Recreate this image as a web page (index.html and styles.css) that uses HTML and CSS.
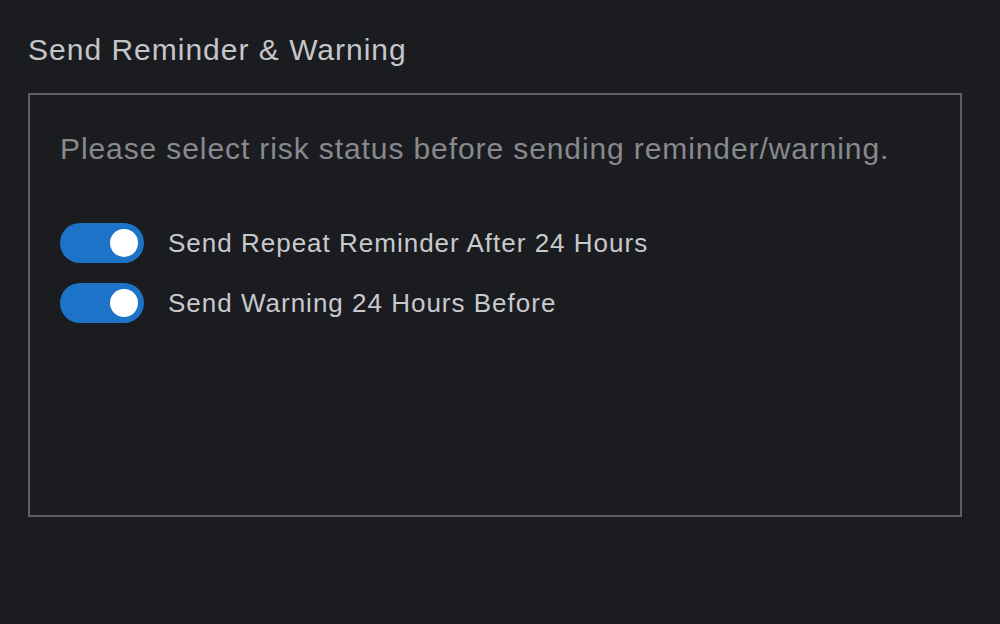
FILE: index.html
```html
<!DOCTYPE html>
<html>
    <head>
        <title>Send Reminder &amp; Warning</title>
        <meta charset="UTF-8">
        <link rel="stylesheet" href="styles.css">
    </head>
    <body>
        <div class="titulo"><h2>Send Reminder &amp; Warning</h2></div>
        <div class="caixa">
            <p class="aviso">Please select risk status before sending reminder/warning.</p>
            <div class="opcoes">
                <label class="opcao">
                    <span class="chave ligada"><span class="bolinha"></span></span>
                    <span class="texto">Send Repeat Reminder After 24 Hours</span>
                </label>
                <label class="opcao">
                    <span class="chave ligada"><span class="bolinha"></span></span>
                    <span class="texto">Send Warning 24 Hours Before</span>
                </label>
            </div>
        </div>
    </body>
</html>
```

FILE: styles.css
```css
* {
    margin: 0;
    padding: 0;
    box-sizing: border-box;
    font-family: "Liberation Sans", Arial, sans-serif;
}
body {
    background-color: #1b1c20;
    padding: 33px 28px;
}
.titulo h2 {
    font-size: 30px;
    font-weight: normal;
    line-height: 34px;
    letter-spacing: 1px;
    color: #c5c6c9;
}
.caixa {
    margin-top: 26px;
    width: 934px;
    height: 424px;
    border: 2px solid #5f6064;
    padding: 37px 30px;
}
.aviso {
    font-size: 30px;
    line-height: 34px;
    letter-spacing: 0.9px;
    color: #88898d;
}
.opcoes {
    margin-top: 57px;
    display: flex;
    flex-direction: column;
    gap: 20px;
}
.opcao {
    display: flex;
    align-items: center;
    gap: 24px;
}
.chave {
    display: flex;
    align-items: center;
    justify-content: flex-end;
    width: 84px;
    height: 40px;
    padding: 0 6px;
    border-radius: 20px;
    background-color: #1c73c7;
}
.bolinha {
    width: 28px;
    height: 28px;
    border-radius: 50%;
    background-color: #ffffff;
}
.texto {
    font-size: 26px;
    line-height: 30px;
    letter-spacing: 1px;
    color: #c8c9cc;
}
```
